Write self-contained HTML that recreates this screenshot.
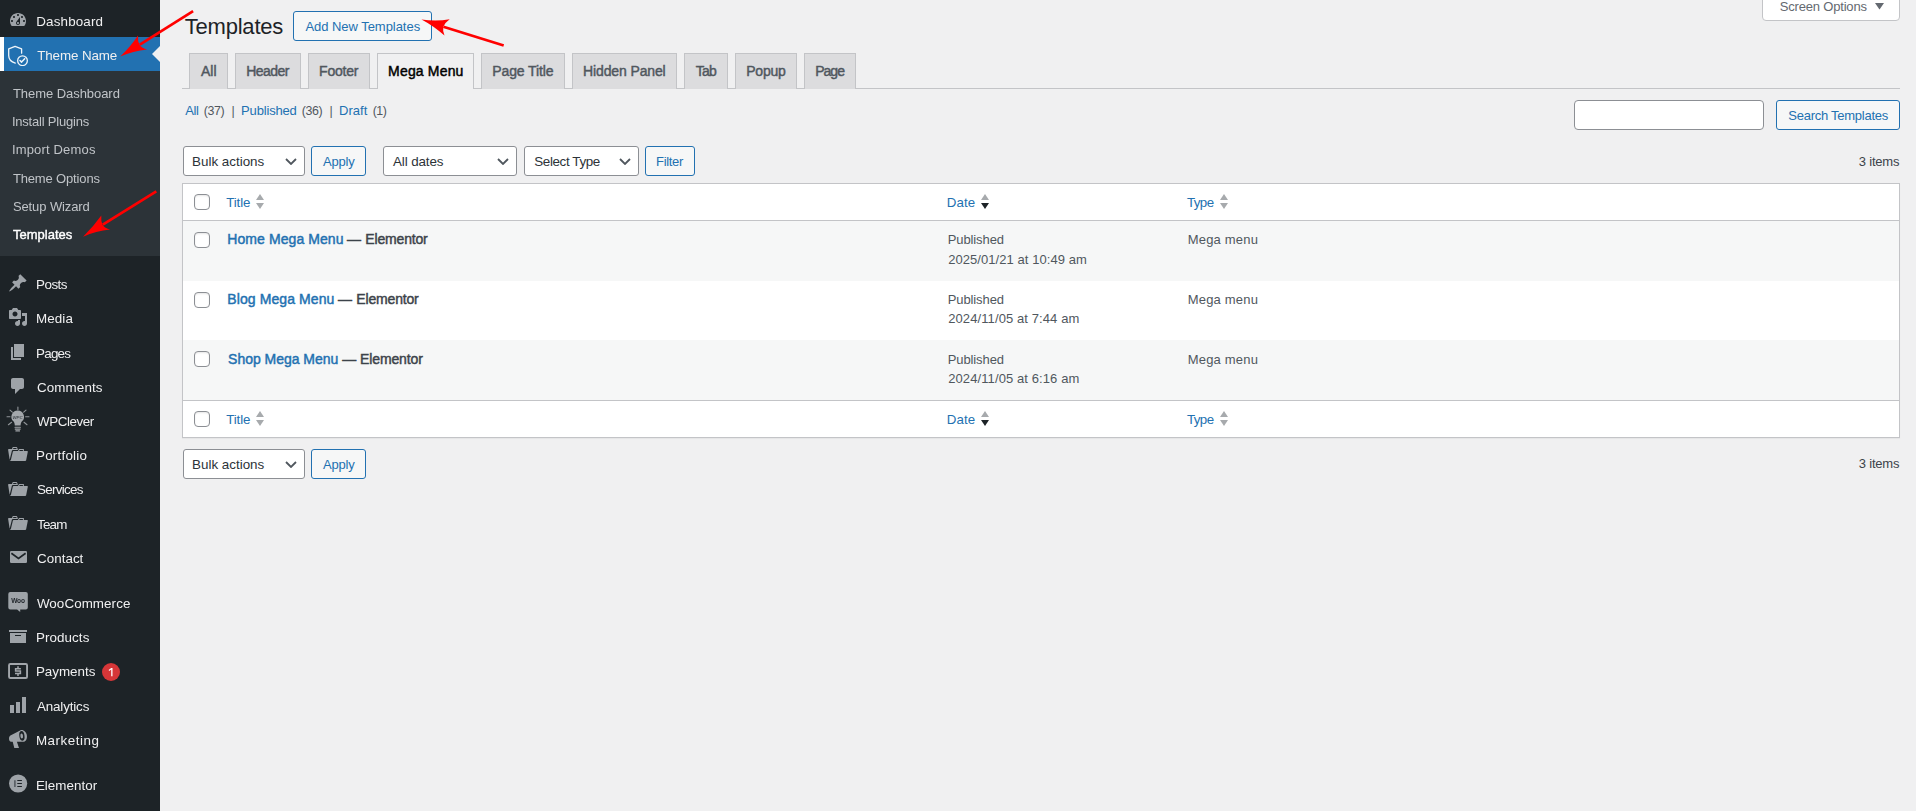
<!DOCTYPE html>
<html lang="en"><head>
<meta charset="utf-8">
<title>Templates</title>
<style>
*{box-sizing:border-box;margin:0;padding:0}
html,body{width:1916px;height:811px;overflow:hidden;background:#f0f0f1}
body{font-family:"Liberation Sans",sans-serif;font-size:13px;color:#3c434a;position:relative}
a{text-decoration:none;color:#2271b1}
.abs{position:absolute}
.t{position:absolute;white-space:nowrap;line-height:1}
/* ---------- sidebar ---------- */
#menu{position:absolute;left:0;top:0;width:160px;height:811px;background:#1d2327;will-change:transform}
#menu .it{position:absolute;left:0;width:160px;height:34px}
#menu .it .nm{position:absolute;left:36px;top:10px;font-size:13.4px;line-height:1;color:#f0f0f1;white-space:nowrap}
#menu .it svg{position:absolute;left:8px;top:7px;width:20px;height:20px;fill:#9ea3a8}
#menu .cur{background:#2271b1}
#menu .cur:before{content:"";position:absolute;left:0;top:0;width:4px;height:100%;background:#fff}
#menu .cur:after{content:"";position:absolute;right:0;top:9px;border:8px solid transparent;border-right-color:#f0f0f1;border-left-width:0}
#sub{position:absolute;left:0;top:71px;width:160px;height:185px;background:#2c3338}
#sub a{position:absolute;left:12px;font-size:13px;line-height:1;color:#c0c4c8;white-space:nowrap}
#sub a.on{color:#fff;font-weight:normal;-webkit-text-stroke:.4px currentColor}
.badge{position:absolute;left:102px;top:9px;width:18px;height:18px;border-radius:9px;background:#d63638;color:#fff;font-size:0;line-height:0}
#menu .it .badge svg{left:0;top:0;width:18px;height:18px;fill:#fff}
/* ---------- content ---------- */
.btn{position:absolute;border:1px solid #2271b1;border-radius:3px;background:#f6f7f7;color:#2271b1;font-size:13px;height:30px}
.btn span{position:absolute;top:8px;line-height:1;white-space:nowrap}
.sel{position:absolute;border:1px solid #8c8f94;border-radius:3px;background:#fff;color:#2c3338;font-size:13.4px;height:30px}
.sel span{position:absolute;left:9px;top:8px;line-height:1;white-space:nowrap}
.sel svg{position:absolute;right:7px;top:11px;width:12px;height:7px}
.tab{position:absolute;top:53px;height:36px;border:1px solid #c3c4c7;border-bottom:none;background:#dcdcde;color:#50575e;font-size:14px;font-weight:normal;-webkit-text-stroke:.45px currentColor}
.tab span{position:absolute;left:10px;top:11px;line-height:1;white-space:nowrap}
.tab.on{background:#f0f0f1;color:#000;height:36px;font-size:14px}
.s13{font-size:13px}.g{color:#50575e;font-size:12.4px}.rt{font-size:14px;font-weight:normal;-webkit-text-stroke:.45px currentColor}.d{color:#3c434a}
.cb{position:absolute;left:194px;width:16px;height:16px;border:1px solid #8c8f94;border-radius:4px;background:#fff;box-shadow:inset 0 1px 2px rgba(0,0,0,.1)}
.srt{position:absolute;width:8px;height:15px;margin-left:1px}
</style>
</head>
<body>
<div id="menu">
  <a class="it" style="top:3px"><svg viewBox="0 0 20 20"><path d="M3.76 16h12.48c1.1-1.37 1.76-3.11 1.76-5 0-4.42-3.58-8-8-8s-8 3.58-8 8c0 1.89.66 3.63 1.76 5zM10 4c.55 0 1 .45 1 1s-.45 1-1 1-1-.45-1-1 .45-1 1-1zM6 6c.55 0 1 .45 1 1s-.45 1-1 1-1-.45-1-1 .45-1 1-1zm8 0c.55 0 1 .45 1 1s-.45 1-1 1-1-.45-1-1 .45-1 1-1zm-5.37 5.55L12 7v6c0 1.1-.9 2-2 2s-2-.9-2-2c0-.57.24-1.08.63-1.45zM4 10c.55 0 1 .45 1 1s-.45 1-1 1-1-.45-1-1 .45-1 1-1zm12 0c.55 0 1 .45 1 1s-.45 1-1 1-1-.45-1-1 .45-1 1-1zm-5 3c0-.55-.45-1-1-1s-1 .45-1 1 .45 1 1 1 1-.45 1-1z"></path></svg><span class="nm" style="letter-spacing: 0.17px; margin-left: 0.2px; margin-top: 2px;">Dashboard</span></a>
  <a class="it cur" style="top:37px"><svg viewBox="6 44 24 22" style="left:6px;top:7px;width:24px;height:22px;fill:none;stroke:#fff;stroke-opacity:.93;stroke-width:1.3;stroke-linecap:round;stroke-linejoin:round"><path d="M21.600 53.200V48.900L15.100 46.300 8.700 48.900V55.500C8.700 59.500 11.500 62 15.300 63.100"></path><circle cx="22.500" cy="60.700" r="4.850"></circle><path d="M20 60.500l1.600 1.600 3.100-3.300" style="stroke-width:1.500"></path></svg><span class="nm" style="letter-spacing: -0.11px; margin-left: 1.2px; margin-top: 2px;">Theme Name</span></a>
  <div id="sub">
    <a style="top: 15px; letter-spacing: -0.05px; margin-left: 0.9px; margin-top: 1px;">Theme Dashboard</a>
    <a style="top: 43px; letter-spacing: -0.21px; margin-left: -0.1px; margin-top: 1px;">Install Plugins</a>
    <a style="top: 71px; letter-spacing: 0.17px; margin-left: -0.1px; margin-top: 1px;">Import Demos</a>
    <a style="top: 100px; letter-spacing: -0.15px; margin-left: 0.9px; margin-top: 1px;">Theme Options</a>
    <a style="top: 128px; letter-spacing: -0.1px; margin-left: 0.9px; margin-top: 1px;">Setup Wizard</a>
    <a class="on" style="top: 156px; letter-spacing: 0.02px; margin-left: 0.9px; margin-top: 1px;">Templates</a>
  </div>
  <a class="it" style="top:266px"><svg viewBox="0 0 20 20"><path d="M10.44 3.02l1.82-1.82 6.36 6.35-1.83 1.82c-1.05-.68-2.48-.57-3.41.36l-.75.75c-.92.93-1.04 2.35-.35 3.41l-1.83 1.82-2.41-2.41-2.8 2.79c-.42.42-3.38 2.71-3.8 2.29s1.86-3.39 2.28-3.81l2.79-2.79L4.1 9.36l1.83-1.82c1.05.69 2.48.57 3.4-.36l.75-.75c.93-.92 1.05-2.35.36-3.41z"></path></svg><span class="nm" style="letter-spacing: -0.5px; margin-top: 2px;">Posts</span></a>
  <a class="it" style="top:300px"><svg viewBox="0 0 20 20"><path d="M13 11V4c0-.55-.45-1-1-1h-1.670L9 1H5L3.670 3H2c-.55 0-1 .45-1 1v7c0 .55.45 1 1 1h10c.55 0 1-.45 1-1zM7 4.5c1.380 0 2.500 1.120 2.500 2.500S8.380 9.500 7 9.500 4.500 8.380 4.500 7 5.620 4.500 7 4.500zM14 6h5v10.500c0 1.380-1.120 2.500-2.500 2.500S14 17.880 14 16.500s1.120-2.500 2.500-2.500c.170 0 .340.020.500.050V9h-3V6zm-4 8.050V13h2v3.500c0 1.380-1.120 2.500-2.500 2.500S7 17.880 7 16.500 8.120 14 9.500 14c.170 0 .340.020.500.050z"></path></svg><span class="nm" style="letter-spacing: 0.09px; margin-top: 2px;">Media</span></a>
  <a class="it" style="top:335px"><svg viewBox="0 0 20 20"><path d="M6 15V2h10v13H6zm-1 1h8v2H3V5h2v11z"></path></svg><span class="nm" style="letter-spacing: -0.74px; margin-top: 2px;">Pages</span></a>
  <a class="it" style="top:369px"><svg viewBox="0 0 20 20"><path d="M5 2h9c1.100 0 2 .9 2 2v7c0 1.100-.9 2-2 2h-2l-5 5v-5H5c-1.100 0-2-.9-2-2V4c0-1.100.9-2 2-2z"></path></svg><span class="nm" style="letter-spacing: 0.11px; margin-left: 1px; margin-top: 2px;">Comments</span></a>
  <a class="it" style="top:403px"><svg viewBox="5 404 26 30" style="left:5px;top:1px;width:26px;height:30px;fill:#a4a8ac"><path d="M17.700 410.400a6.300 6.300 0 0 1 4.300 10.900c-.9.900-1.300 2-1.400 4.300h-5.800c-.1-2.300-.5-3.400-1.400-4.300A6.300 6.300 0 0 1 17.700 410.400z"></path><g fill="none" stroke="#a4a8ac" stroke-width="1.100" stroke-linecap="round"><path d="M15 427.300h5.400M15.200 429.100h5M15.900 430.900h3.600"></path><path d="M17.900 407v2.800M7 416.700h3M25.600 416.700h3.400M10 410.200l2.300 2M26 410.200l-2.300 2M8.400 424.700l3.200-2.400M27 424.700l-3-2.400" stroke-opacity=".85"></path></g><text x="17.600" y="418.500" font-size="4.400" font-weight="bold" font-style="italic" text-anchor="middle" fill="#2a3036" fill-opacity=".75" font-family="Liberation Sans, sans-serif">WPC</text></svg><span class="nm" style="letter-spacing: -0.42px; margin-left: 1px; margin-top: 2px;">WPClever</span></a>
  <a class="it" style="top:437px"><svg viewBox="0 0 20 20"><path d="M4 5H.78c-.37 0-.74.32-.69.84l1.560 9.990S3.500 8.470 3.860 6.700c.110-.53.610-.7.980-.7H10s-.7-2.080-.77-2.310C9.110 3.250 8.890 3 8.450 3H5.140c-.36 0-.7.230-.8.640C4.250 4.040 4 5 4 5zm4.880 0h-4s.42-1 .87-1h2.130c.48 0 1 1 1 1zM2.670 16.250c-.31.470-.76.750-1.260.750h15.730c.54 0 .92-.31 1.030-.83.440-2.190 1.680-8.440 1.680-8.440.07-.5-.3-.73-.62-.73H16V5.530c0-.16-.26-.53-.66-.53h-3.760c-.52 0-.87.580-.87.580L10 7H5.590c-.32 0-.63.190-.69.5 0 0-1.590 6.700-1.720 7.330-.07.370-.22.990-.51 1.420zM15.380 7H11s.58-1 1.130-1h2.290c.71 0 .96 1 .96 1z"></path></svg><span class="nm" style="letter-spacing: 0.22px; margin-top: 2px;">Portfolio</span></a>
  <a class="it" style="top:472px"><svg viewBox="0 0 20 20"><path d="M4 5H.78c-.37 0-.74.32-.69.84l1.560 9.990S3.500 8.470 3.860 6.700c.110-.53.610-.7.980-.7H10s-.7-2.080-.77-2.310C9.110 3.250 8.890 3 8.450 3H5.140c-.36 0-.7.230-.8.640C4.250 4.040 4 5 4 5zm4.880 0h-4s.42-1 .87-1h2.130c.48 0 1 1 1 1zM2.670 16.250c-.31.470-.76.750-1.260.750h15.730c.54 0 .92-.31 1.030-.83.440-2.190 1.680-8.440 1.680-8.440.07-.5-.3-.73-.62-.73H16V5.530c0-.16-.26-.53-.66-.53h-3.760c-.52 0-.87.580-.87.580L10 7H5.590c-.32 0-.63.190-.69.5 0 0-1.590 6.700-1.720 7.330-.07.370-.22.990-.51 1.420zM15.380 7H11s.58-1 1.130-1h2.290c.71 0 .96 1 .96 1z"></path></svg><span class="nm" style="letter-spacing: -0.69px; margin-left: 1px; margin-top: 1px;">Services</span></a>
  <a class="it" style="top:506px"><svg viewBox="0 0 20 20"><path d="M4 5H.78c-.37 0-.74.32-.69.84l1.560 9.990S3.500 8.470 3.860 6.700c.110-.53.610-.7.980-.7H10s-.7-2.080-.77-2.310C9.110 3.250 8.890 3 8.450 3H5.140c-.36 0-.7.230-.8.640C4.250 4.040 4 5 4 5zm4.880 0h-4s.42-1 .87-1h2.130c.48 0 1 1 1 1zM2.670 16.250c-.31.470-.76.750-1.260.750h15.730c.54 0 .92-.31 1.030-.83.440-2.190 1.680-8.440 1.680-8.440.07-.5-.3-.73-.62-.73H16V5.530c0-.16-.26-.53-.66-.53h-3.760c-.52 0-.87.580-.87.580L10 7H5.590c-.32 0-.63.190-.69.5 0 0-1.590 6.700-1.720 7.330-.07.370-.22.990-.51 1.420zM15.380 7H11s.58-1 1.130-1h2.290c.71 0 .96 1 .96 1z"></path></svg><span class="nm" style="letter-spacing: -0.8px; margin-left: 1px; margin-top: 2px;">Team</span></a>
  <a class="it" style="top:540px"><svg viewBox="0 0 20 20"><rect x="2" y="4" width="17" height="12" rx="1.200"></rect><path d="M3.400 6.300l7.100 5.200 7.100-5.200" fill="none" stroke="#1d2327" stroke-width="1.700"></path></svg><span class="nm" style="letter-spacing: 0.03px; margin-left: 1px; margin-top: 2px;">Contact</span></a>
  <a class="it" style="top:585px"><svg viewBox="8 591 20 22" style="left:8px;top:6px;width:20px;height:22px"><path d="M10.300 591.900h15.500a2 2 0 0 1 2 2v13.700a2 2 0 0 1-2 2h-5.600v2.400l-3.100-2.400h-6.800a2 2 0 0 1-2-2v-13.700a2 2 0 0 1 2-2z"></path><text x="18" y="603.300" font-size="6.600" font-weight="bold" text-anchor="middle" fill="#22282d" font-family="Liberation Sans, sans-serif" letter-spacing="-.2">Woo</text></svg><span class="nm" style="letter-spacing: 0.07px; margin-left: 0.9px; margin-top: 2px;">WooCommerce</span></a>
  <a class="it" style="top:619px"><svg viewBox="0 0 20 20"><path d="M19 4v2H1V4h18zM2 7h16v10H2V7zm11 3V9H7v1h6z"></path></svg><span class="nm" style="letter-spacing: 0.09px; margin-left: -0.1px; margin-top: 2px;">Products</span></a>
  <a class="it" style="top:654px"><svg viewBox="8 662 20 18" style="left:8px;top:8px;width:20px;height:18px;fill:none;stroke:#a2a6ab"><rect x="9.050" y="663.950" width="18" height="14.100" rx="1.300" stroke-width="1.900"></rect><path d="M20.900 668.700h-5.300v2.400h4.800v2.500H15M18 666.300v1.700M18 674.300v1.700" stroke-width="1.500"></path></svg><span class="nm" style="letter-spacing: -0.01px; margin-left: -0.1px; margin-top: 1px;">Payments</span><span class="badge"><svg viewBox="0 0 18 18"><path d="M9.200 4.900h1.300v8.300H9.200V6.500L7.200 7.900 6.600 6.900z"></path></svg>1</span></a>
  <a class="it" style="top:688px"><svg viewBox="0 0 20 20"><path d="M18 18V2h-4v16h4zm-6 0V7H8v11h4zm-6 0v-8H2v8h4z"></path></svg><span class="nm" style="letter-spacing: -0.14px; margin-left: 0.9px; margin-top: 2px;">Analytics</span></a>
  <a class="it" style="top:722px"><svg viewBox="8 729 20 20" style="left:8px;top:7px;width:20px;height:20px"><path d="M10.400 735.600L20.600 730.200C23 729.100 26.600 731.800 26.900 735.800 27.200 739.600 25.400 742 23.200 741.800H16.900L19 747.900H14.300L12.700 741.800H11.200C9.600 741.800 9 740.200 9 738.600 9 737.200 9.600 736.100 10.400 735.600z"></path><ellipse cx="21.900" cy="735.800" rx="2.600" ry="4.900" fill="#1d2327" transform="rotate(-7 21.900 735.800)"></ellipse><ellipse cx="21.700" cy="736" rx="1.300" ry="2.600" transform="rotate(-7 21.700 736)"></ellipse></svg><span class="nm" style="letter-spacing: 0.54px; margin-left: -0.1px; margin-top: 2px;">Marketing</span></a>
  <a class="it" style="top:767px"><svg viewBox="0 0 20 20"><circle cx="10.100" cy="9.500" r="9.100"></circle><path d="M6.200 6.200h1.400v6.900H6.200z" fill="#4a5056"></path><path d="M9.300 5.950h4.600v1.100H9.300zM9.300 8.950h4.600v1.100H9.300zM9.300 11.950h4.600v1.100H9.300z" fill="#1d2327"></path></svg><span class="nm" style="letter-spacing: 0.03px; margin-left: -0.1px; margin-top: 2px;">Elementor</span></a>
</div>

<div id="content">
  <!-- screen options -->
  <div class="abs" style="left:1762px;top:-6px;width:138px;height:27px;background:#fff;border:1px solid #c3c4c7;border-radius:0 0 4px 4px"></div>
  <span class="t" style="left: 1779px; top: -1px; font-size: 13px; color: rgb(100, 105, 112); letter-spacing: -0.18px; margin-left: 0.7px; margin-top: 1px;">Screen Options</span>
  <svg class="abs" style="left:1875px;top:3px" width="9" height="7" viewBox="0 0 9 7"><path d="M0 0h9L4.500 6.500z" fill="#646970"></path></svg>

  <!-- heading -->
  <h1 class="t" style="left: 182px; top: 14px; font-size: 22px; font-weight: normal; color: rgb(29, 35, 39); letter-spacing: -0.2px; margin-left: 2.7px; margin-top: 2px;">Templates</h1>
  <a class="btn" style="left:293px;top:11px;width:139px"><span style="left: 11px; letter-spacing: -0.04px; margin-left: 0.4px;">Add New Templates</span></a>

  <!-- tabs -->
  <div class="abs" style="left:182px;top:88px;width:1718px;height:1px;background:#c3c4c7"></div>
  <a class="tab" style="left:189px;width:39px"><span style="letter-spacing: 0.03px; margin-left: 1px; margin-top: -1px;">All</span></a>
  <a class="tab" style="left:235px;width:66px"><span style="letter-spacing: -0.53px; margin-left: 0.2px; margin-top: -1px;">Header</span></a>
  <a class="tab" style="left:308px;width:62px"><span style="letter-spacing: -0.22px; margin-left: 0.1px; margin-top: -1px;">Footer</span></a>
  <a class="tab on" style="left:377px;width:97px"><span style="letter-spacing: 0.17px; margin-left: 0.1px; margin-top: -1px;">Mega Menu</span></a>
  <a class="tab" style="left:481px;width:84px"><span style="letter-spacing: -0.09px; margin-left: 0.2px; margin-top: -1px;">Page Title</span></a>
  <a class="tab" style="left:572px;width:105px"><span style="letter-spacing: -0.13px; margin-left: 0.1px; margin-top: -1px;">Hidden Panel</span></a>
  <a class="tab" style="left:684px;width:44px"><span style="letter-spacing: -0.74px; margin-left: 0.7px; margin-top: -1px;">Tab</span></a>
  <a class="tab" style="left:735px;width:62px"><span style="letter-spacing: -0.27px; margin-left: 0.3px; margin-top: -1px;">Popup</span></a>
  <a class="tab" style="left:804px;width:52px"><span style="letter-spacing: -0.97px; margin-left: 0.2px; margin-top: -1px;">Page</span></a>

  <!-- subsubsub -->
  <a class="t s13" style="left: 185px; top: 104px; letter-spacing: -0.48px; margin-left: 0.3px;">All</a><span class="t s13 g" style="left: 205px; top: 104px; letter-spacing: -0.4px; margin-left: -1.3px; margin-top: 1px;">(37)</span><span class="t s13 g" style="left: 231px; top: 104px; margin-left: 0.5px; margin-top: 1px;">|</span>
  <a class="t s13" style="left: 241px; top: 104px; letter-spacing: -0.17px; margin-left: 0.1px;">Published</a><span class="t s13 g" style="left: 301px; top: 104px; letter-spacing: -0.37px; margin-left: 0.8px; margin-top: 1px;">(36)</span><span class="t s13 g" style="left: 329px; top: 104px; margin-left: 0.6px; margin-top: 1px;">|</span>
  <a class="t s13" style="left: 339px; top: 104px; letter-spacing: 0.04px;">Draft</a><span class="t s13 g" style="left: 372px; top: 104px; letter-spacing: -0.51px; margin-left: 0.7px; margin-top: 1px;">(1)</span>

  <!-- search -->
  <div class="abs" style="left:1574px;top:100px;width:190px;height:30px;border:1px solid #8c8f94;border-radius:4px;background:#fff"></div>
  <a class="btn" style="left:1776px;top:100px;width:124px"><span style="left: 11px; letter-spacing: -0.26px; margin-left: 0.3px;">Search Templates</span></a>

  <!-- top tablenav -->
  <div class="sel" style="left:183px;top:146px;width:122px"><span style="letter-spacing: -0.01px; margin-left: -0.9px;">Bulk actions</span><svg viewBox="0 0 12 7"><path d="M1 1l5 5 5-5" fill="none" stroke="#50575e" stroke-width="1.800"></path></svg></div>
  <a class="btn" style="left:311px;top:146px;width:55px"><span style="left: 11px; letter-spacing: -0.2px;">Apply</span></a>
  <div class="sel" style="left:383px;top:146px;width:134px"><span style="letter-spacing: -0.11px;">All dates</span><svg viewBox="0 0 12 7"><path d="M1 1l5 5 5-5" fill="none" stroke="#50575e" stroke-width="1.800"></path></svg></div>
  <div class="sel" style="left:524px;top:146px;width:115px"><span style="letter-spacing: -0.38px; margin-left: 0.3px;">Select Type</span><svg viewBox="0 0 12 7"><path d="M1 1l5 5 5-5" fill="none" stroke="#50575e" stroke-width="1.800"></path></svg></div>
  <a class="btn" style="left:645px;top:146px;width:50px"><span style="left: 11px; letter-spacing: -0.35px; margin-left: -0.9px;">Filter</span></a>
  <span class="t" style="left: 1858px; top: 155px; font-size: 13px; color: rgb(60, 67, 74); letter-spacing: -0.18px; margin-left: 0.7px;">3 items</span>

  <!-- table -->
  <div class="abs" style="left:182px;top:183px;width:1718px;height:255px;background:#fff;border:1px solid #c3c4c7;box-shadow:0 1px 1px rgba(0,0,0,.04)"></div>
  <div class="abs" style="left:183px;top:220px;width:1716px;height:1px;background:#c3c4c7"></div>
  <div class="abs" style="left:183px;top:400px;width:1716px;height:1px;background:#c3c4c7"></div>
  <div class="abs" style="left:183px;top:221px;width:1716px;height:60px;background:#f6f7f7"></div>
  <div class="abs" style="left:183px;top:340px;width:1716px;height:60px;background:#f6f7f7"></div>

  <!-- header row -->
  <div class="cb" style="top:194px"></div>
  <a class="t" style="left: 225px; top: 195px; font-size: 13.3px; letter-spacing: -0.13px; margin-left: 1.3px; margin-top: 1px;">Title</a>
  <svg class="srt" style="left:255px;top:194px" viewBox="0 0 9 15" preserveAspectRatio="none"><path d="M4.500 0L9 6H0z" fill="#a7aaad"></path><path d="M0 9h9L4.500 15z" fill="#a7aaad"></path></svg>
  <a class="t" style="left: 947px; top: 195px; font-size: 13.3px; letter-spacing: 0.1px; margin-left: -0.3px; margin-top: 1px;">Date</a>
  <svg class="srt" style="left:980px;top:194px" viewBox="0 0 9 15" preserveAspectRatio="none"><path d="M4.500 0L9 6H0z" fill="#a7aaad"></path><path d="M0 9h9L4.500 15z" fill="#1d2327"></path></svg>
  <a class="t" style="left: 1186px; top: 195px; font-size: 13.3px; letter-spacing: -0.54px; margin-left: 0.9px; margin-top: 1px;">Type</a>
  <svg class="srt" style="left:1219px;top:194px" viewBox="0 0 9 15" preserveAspectRatio="none"><path d="M4.500 0L9 6H0z" fill="#a7aaad"></path><path d="M0 9h9L4.500 15z" fill="#a7aaad"></path></svg>

  <!-- row 1 -->
  <div class="cb" style="top:232px"></div>
  <a class="t rt" style="left: 227px; top: 232px; letter-spacing: 0.08px; margin-left: 0.3px;">Home Mega Menu</a><span class="t rt d" style="left: 347px; top: 232px; margin-left: 0.1px;">—</span><span class="t rt d" style="left: 365px; top: 232px; letter-spacing: -0.17px; margin-left: 0.3px;">Elementor</span>
  <span class="t" style="left: 948px; top: 233px; color: rgb(80, 87, 94); letter-spacing: -0.1px; margin-left: -0.3px;">Published</span>
  <span class="t" style="left: 948px; top: 253px; color: rgb(80, 87, 94); letter-spacing: 0.06px; margin-left: 0.2px;">2025/01/21 at 10:49 am</span>
  <span class="t" style="left: 1188px; top: 233px; color: rgb(80, 87, 94); letter-spacing: 0.2px; margin-left: -0.3px;">Mega menu</span>
  <!-- row 2 -->
  <div class="cb" style="top:292px"></div>
  <a class="t rt" style="left: 227px; top: 292px; letter-spacing: 0.09px; margin-left: 0.3px;">Blog Mega Menu</a><span class="t rt d" style="left: 347px; top: 292px; margin-left: -8.9px;">—</span><span class="t rt d" style="left: 365px; top: 292px; letter-spacing: -0.17px; margin-left: -8.7px;">Elementor</span>
  <span class="t" style="left: 948px; top: 293px; color: rgb(80, 87, 94); letter-spacing: -0.1px; margin-left: -0.3px;">Published</span>
  <span class="t" style="left: 948px; top: 312px; color: rgb(80, 87, 94); letter-spacing: 0.1px; margin-left: 0.2px;">2024/11/05 at 7:44 am</span>
  <span class="t" style="left: 1188px; top: 293px; color: rgb(80, 87, 94); letter-spacing: 0.2px; margin-left: -0.3px;">Mega menu</span>
  <!-- row 3 -->
  <div class="cb" style="top:351px"></div>
  <a class="t rt" style="left: 227px; top: 352px; letter-spacing: -0.03px; margin-left: 1.1px;">Shop Mega Menu</a><span class="t rt d" style="left: 347px; top: 352px; margin-left: -4.8px;">—</span><span class="t rt d" style="left: 365px; top: 352px; letter-spacing: -0.14px; margin-left: -4.9px;">Elementor</span>
  <span class="t" style="left: 948px; top: 353px; color: rgb(80, 87, 94); letter-spacing: -0.1px; margin-left: -0.3px;">Published</span>
  <span class="t" style="left: 948px; top: 372px; color: rgb(80, 87, 94); letter-spacing: 0.1px; margin-left: 0.2px;">2024/11/05 at 6:16 am</span>
  <span class="t" style="left: 1188px; top: 353px; color: rgb(80, 87, 94); letter-spacing: 0.2px; margin-left: -0.3px;">Mega menu</span>

  <!-- footer row -->
  <div class="cb" style="top:411px"></div>
  <a class="t" style="left: 225px; top: 412px; font-size: 13.3px; letter-spacing: -0.13px; margin-left: 1.3px; margin-top: 1px;">Title</a>
  <svg class="srt" style="left:255px;top:411px" viewBox="0 0 9 15" preserveAspectRatio="none"><path d="M4.500 0L9 6H0z" fill="#a7aaad"></path><path d="M0 9h9L4.500 15z" fill="#a7aaad"></path></svg>
  <a class="t" style="left: 947px; top: 412px; font-size: 13.3px; letter-spacing: 0.1px; margin-left: -0.3px; margin-top: 1px;">Date</a>
  <svg class="srt" style="left:980px;top:411px" viewBox="0 0 9 15" preserveAspectRatio="none"><path d="M4.500 0L9 6H0z" fill="#a7aaad"></path><path d="M0 9h9L4.500 15z" fill="#1d2327"></path></svg>
  <a class="t" style="left: 1186px; top: 412px; font-size: 13.3px; letter-spacing: -0.54px; margin-left: 0.9px; margin-top: 1px;">Type</a>
  <svg class="srt" style="left:1219px;top:411px" viewBox="0 0 9 15" preserveAspectRatio="none"><path d="M4.500 0L9 6H0z" fill="#a7aaad"></path><path d="M0 9h9L4.500 15z" fill="#a7aaad"></path></svg>

  <!-- bottom tablenav -->
  <div class="sel" style="left:183px;top:449px;width:122px"><span style="letter-spacing: -0.01px; margin-left: -0.9px;">Bulk actions</span><svg viewBox="0 0 12 7"><path d="M1 1l5 5 5-5" fill="none" stroke="#50575e" stroke-width="1.800"></path></svg></div>
  <a class="btn" style="left:311px;top:449px;width:55px"><span style="left: 11px; letter-spacing: -0.2px;">Apply</span></a>
  <span class="t" style="left: 1858px; top: 457px; font-size: 13px; color: rgb(60, 67, 74); letter-spacing: -0.18px; margin-left: 0.7px;">3 items</span>
</div>

<svg class="abs" style="left:0;top:0;pointer-events:none" width="1916" height="811" viewBox="0 0 1916 811">
  <g stroke="#ff0000" stroke-width="2.700" stroke-linecap="butt" fill="none">
    <path d="M193.100 11.200L139.800 44.600"></path>
    <path d="M156.300 191.400L102.800 224.600"></path>
    <path d="M503.700 45.500L443.400 26.800"></path>
  </g>
  <g fill="#ff0000" stroke="none">
    <path d="M120.300 56.500Q131 46 138 35.400Q137.500 41 139.500 44.800Q142 48.500 147.100 49.600Q133 51 120.300 56.500z"></path>
    <path d="M83.100 236.700Q94 226 101.300 215.600Q100.800 221 102.500 224.800Q105 228.500 110.100 229.600Q96 231 83.100 236.700z"></path>
    <path d="M421.500 19.400Q436 21.500 449.700 19.200Q445 22.500 443.300 26.800Q442.500 31 444.500 35.600Q434 26 421.500 19.400z"></path>
  </g>
</svg>



</body></html>
